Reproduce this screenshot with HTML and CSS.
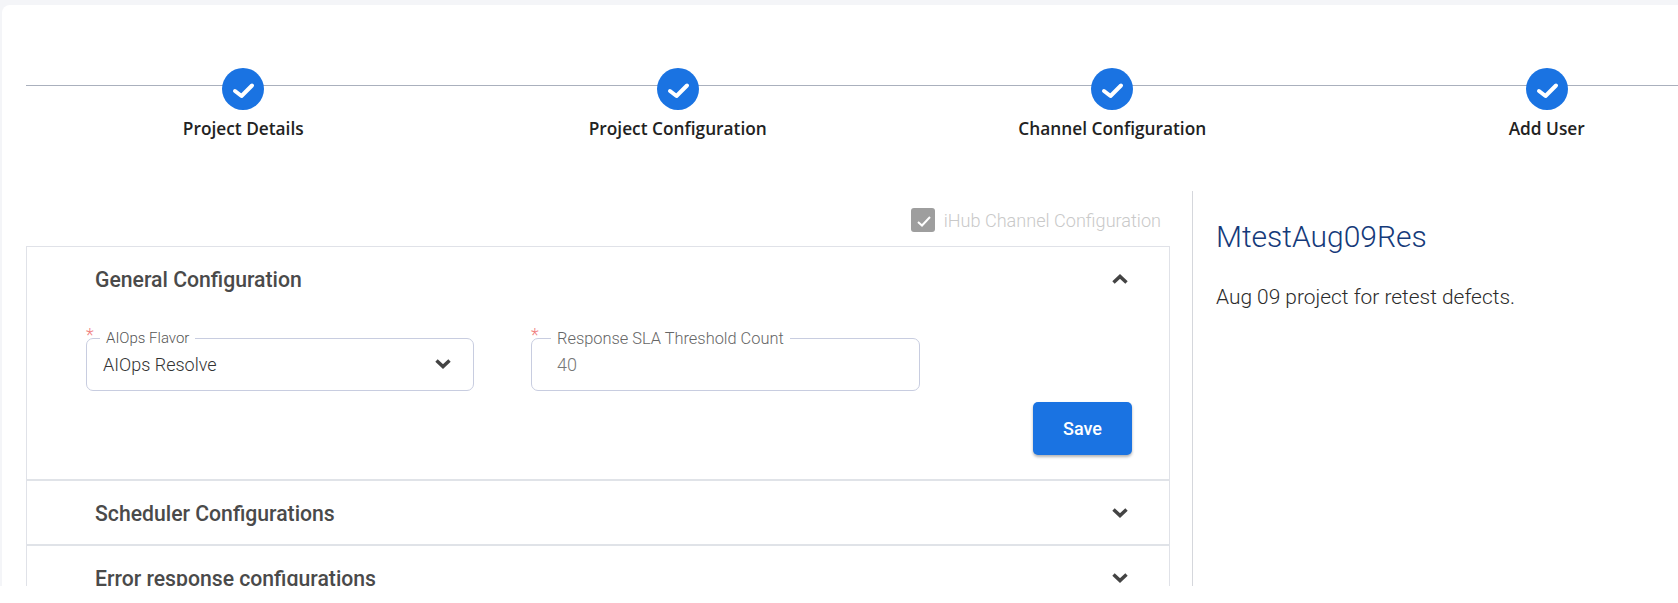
FILE: index.html
```html
<!DOCTYPE html>
<html lang="en">

<head>
    <meta charset="UTF-8">
    <meta name="viewport" content="width=device-width, initial-scale=1.0">
    <title>Project Setup</title>
    <link rel="stylesheet" href="styles.css">
</head>

<body>
    <div class="page">
        <div class="card">
            <div class="stepper">
                <div class="step">
                    <svg class="step-icon" viewBox="0 0 42 42"><circle cx="21" cy="21" r="21" fill="#1a73e2"/><path d="M13 23l6.5 5L30 17.5" fill="none" stroke="#fff" stroke-width="4" stroke-linecap="round" stroke-linejoin="round"/></svg>
                    <span class="step-label">Project Details</span>
                </div>
                <div class="step">
                    <svg class="step-icon" viewBox="0 0 42 42"><circle cx="21" cy="21" r="21" fill="#1a73e2"/><path d="M13 23l6.5 5L30 17.5" fill="none" stroke="#fff" stroke-width="4" stroke-linecap="round" stroke-linejoin="round"/></svg>
                    <span class="step-label">Project Configuration</span>
                </div>
                <div class="step">
                    <svg class="step-icon" viewBox="0 0 42 42"><circle cx="21" cy="21" r="21" fill="#1a73e2"/><path d="M13 23l6.5 5L30 17.5" fill="none" stroke="#fff" stroke-width="4" stroke-linecap="round" stroke-linejoin="round"/></svg>
                    <span class="step-label">Channel Configuration</span>
                </div>
                <div class="step">
                    <svg class="step-icon" viewBox="0 0 42 42"><circle cx="21" cy="21" r="21" fill="#1a73e2"/><path d="M13 23l6.5 5L30 17.5" fill="none" stroke="#fff" stroke-width="4" stroke-linecap="round" stroke-linejoin="round"/></svg>
                    <span class="step-label">Add User</span>
                </div>
            </div>

            <div class="main">
                <div class="left">
                    <div class="channel-check">
                        <span class="checkbox">
                            <svg viewBox="0 0 24 24" width="24" height="24"><path d="M7 14l4 3.5L19 9" fill="none" stroke="#fff" stroke-width="2"/></svg>
                        </span>
                        <span>iHub Channel Configuration</span>
                    </div>

                    <div class="accordion">
                        <div class="section">
                            <div class="section-head">
                                <h3>General Configuration</h3>
                                <svg class="chevron" viewBox="0 0 16 10"><path d="M1.5 8.5L8 2.5l6.5 6" fill="none" stroke="#444" stroke-width="3.5"/></svg>
                            </div>
                            <div class="section-body">
                                <div class="fields">
                                    <div class="field">
                                        <span class="star">*</span>
                                        <fieldset class="select">
                                            <legend>AIOps Flavor</legend>
                                            <span class="value">AIOps Resolve</span>
                                            <svg class="chevron" viewBox="0 0 16 10"><path d="M1.5 1.5L8 7.5l6.5-6" fill="none" stroke="#444" stroke-width="3.5"/></svg>
                                        </fieldset>
                                    </div>
                                    <div class="field">
                                        <span class="star">*</span>
                                        <fieldset class="text-input">
                                            <legend>Response SLA Threshold Count</legend>
                                            <span class="value">40</span>
                                        </fieldset>
                                    </div>
                                </div>
                                <div class="actions">
                                    <button class="save">Save</button>
                                </div>
                            </div>
                        </div>
                        <div class="section">
                            <div class="section-head section-head-closed">
                                <h3>Scheduler Configurations</h3>
                                <svg class="chevron" viewBox="0 0 16 10"><path d="M1.5 1.5L8 7.5l6.5-6" fill="none" stroke="#444" stroke-width="3.5"/></svg>
                            </div>
                        </div>
                        <div class="section">
                            <div class="section-head section-head-closed">
                                <h3>Error response configurations</h3>
                                <svg class="chevron" viewBox="0 0 16 10"><path d="M1.5 1.5L8 7.5l6.5-6" fill="none" stroke="#444" stroke-width="3.5"/></svg>
                            </div>
                        </div>
                    </div>
                </div>

                <div class="right">
                    <h2>MtestAug09Res</h2>
                    <p>Aug 09 project for retest defects.</p>
                </div>
            </div>
        </div>
    </div>
</body>

</html>
```

FILE: styles.css
```css
body {
    font-family: Roboto, sans-serif;
    background-color: white;
    margin: 0;
}

.page {
    height: 586px;
    padding: 5px 0 0 2px;
    box-sizing: border-box;
    background-color: #f4f5f8;
    overflow: hidden;
}

.card {
    height: 581px;
    padding-left: 24px;
    background: white;
    border-top-left-radius: 8px;
    overflow: hidden;
}

/* stepper is wider than the window, last part runs off the right edge */
.stepper {
    position: relative;
    display: flex;
    width: 1738px;
    padding-top: 63px;
}

.stepper::before {
    content: "";
    position: absolute;
    top: 80px;
    left: 0;
    right: 0;
    height: 1px;
    background-color: #aab0bd;
}

.step {
    position: relative;
    flex: 1;
    display: flex;
    flex-direction: column;
    align-items: center;
}

.step-icon {
    width: 42px;
    height: 42px;
}

.step-label {
    margin-top: 8px;
    font-family: "Open Sans", sans-serif;
    font-size: 17.3px;
    font-weight: 560;
    line-height: 22px;
    color: #222;
}

.main {
    display: flex;
    margin-top: 51px;
}

.left {
    width: 1166px;
    padding-right: 22px;
    box-sizing: border-box;
}

.channel-check {
    display: flex;
    justify-content: flex-end;
    align-items: center;
    gap: 9px;
    height: 24px;
    margin-top: 17px;
    padding-right: 9px;
    font-size: 18.1px;
    font-weight: 300;
    color: #c9c9c9;
}

.checkbox {
    width: 24px;
    height: 24px;
    border-radius: 3px;
    background-color: #9e9e9e;
}

.accordion {
    margin-top: 14px;
    border: 1px solid #e0e2e8;
    border-bottom: none;
}

.section {
    border-bottom: 2px solid #e0e3e8;
}

.section-head {
    display: flex;
    justify-content: space-between;
    align-items: center;
    height: 64px;
    padding: 0 41px 0 68px;
}

.section-head-closed {
    height: 63px;
}

.section-head-closed h3 {
    padding-top: 2px;
}

.section-head h3 {
    margin: 0;
    font-size: 21.2px;
    font-weight: 500;
    color: #4a4a4a;
}

.chevron {
    width: 16px;
    height: 10px;
    flex-shrink: 0;
}

.section-body {
    padding: 19px 37px 24px 59px;
}

.fields {
    display: grid;
    grid-template-columns: 388px 389px;
    gap: 57px;
}

.field {
    position: relative;
}

.star {
    position: absolute;
    top: -6px;
    left: 0;
    font-size: 18px;
    font-weight: 300;
    color: #f08080;
}

fieldset {
    display: flex;
    justify-content: space-between;
    align-items: center;
    height: 61px;
    margin: 0;
    box-sizing: border-box;
    border: 1px solid #c8cde0;
    border-radius: 7px;
}

legend {
    padding: 0 6px;
    font-size: 15px;
    font-weight: 300;
    line-height: 17px;
    color: #555;
}

.select {
    padding: 0 22px 9px 16px;
}

.select legend {
    margin-left: -3px;
}

.text-input {
    padding: 0 20px 9px 25px;
}

.text-input legend {
    margin-left: -6px;
    font-size: 16.4px;
    color: #666;
}

.value {
    font-size: 18px;
    font-weight: 300;
    color: #333;
}

.text-input .value {
    color: #777;
}

.actions {
    display: flex;
    justify-content: flex-end;
    margin-top: 11px;
}

.save {
    width: 99px;
    height: 53px;
    border: none;
    border-radius: 5px;
    background-color: #1a73e2;
    box-shadow: 0 2px 3px rgba(0, 0, 0, 0.3);
    font-family: Roboto, sans-serif;
    font-size: 18px;
    font-weight: 500;
    color: white;
}

.right {
    flex: 1;
    height: 400px;
    padding: 26px 0 0 23px;
    border-left: 1px solid #d5d7dc;
}

.right h2 {
    margin: 0;
    font-size: 30px;
    font-weight: 300;
    line-height: 40px;
    color: #153a7a;
}

.right p {
    margin: 26px 0 0;
    font-size: 20.9px;
    font-weight: 300;
    line-height: 28px;
    color: #2b2b2b;
}
```
